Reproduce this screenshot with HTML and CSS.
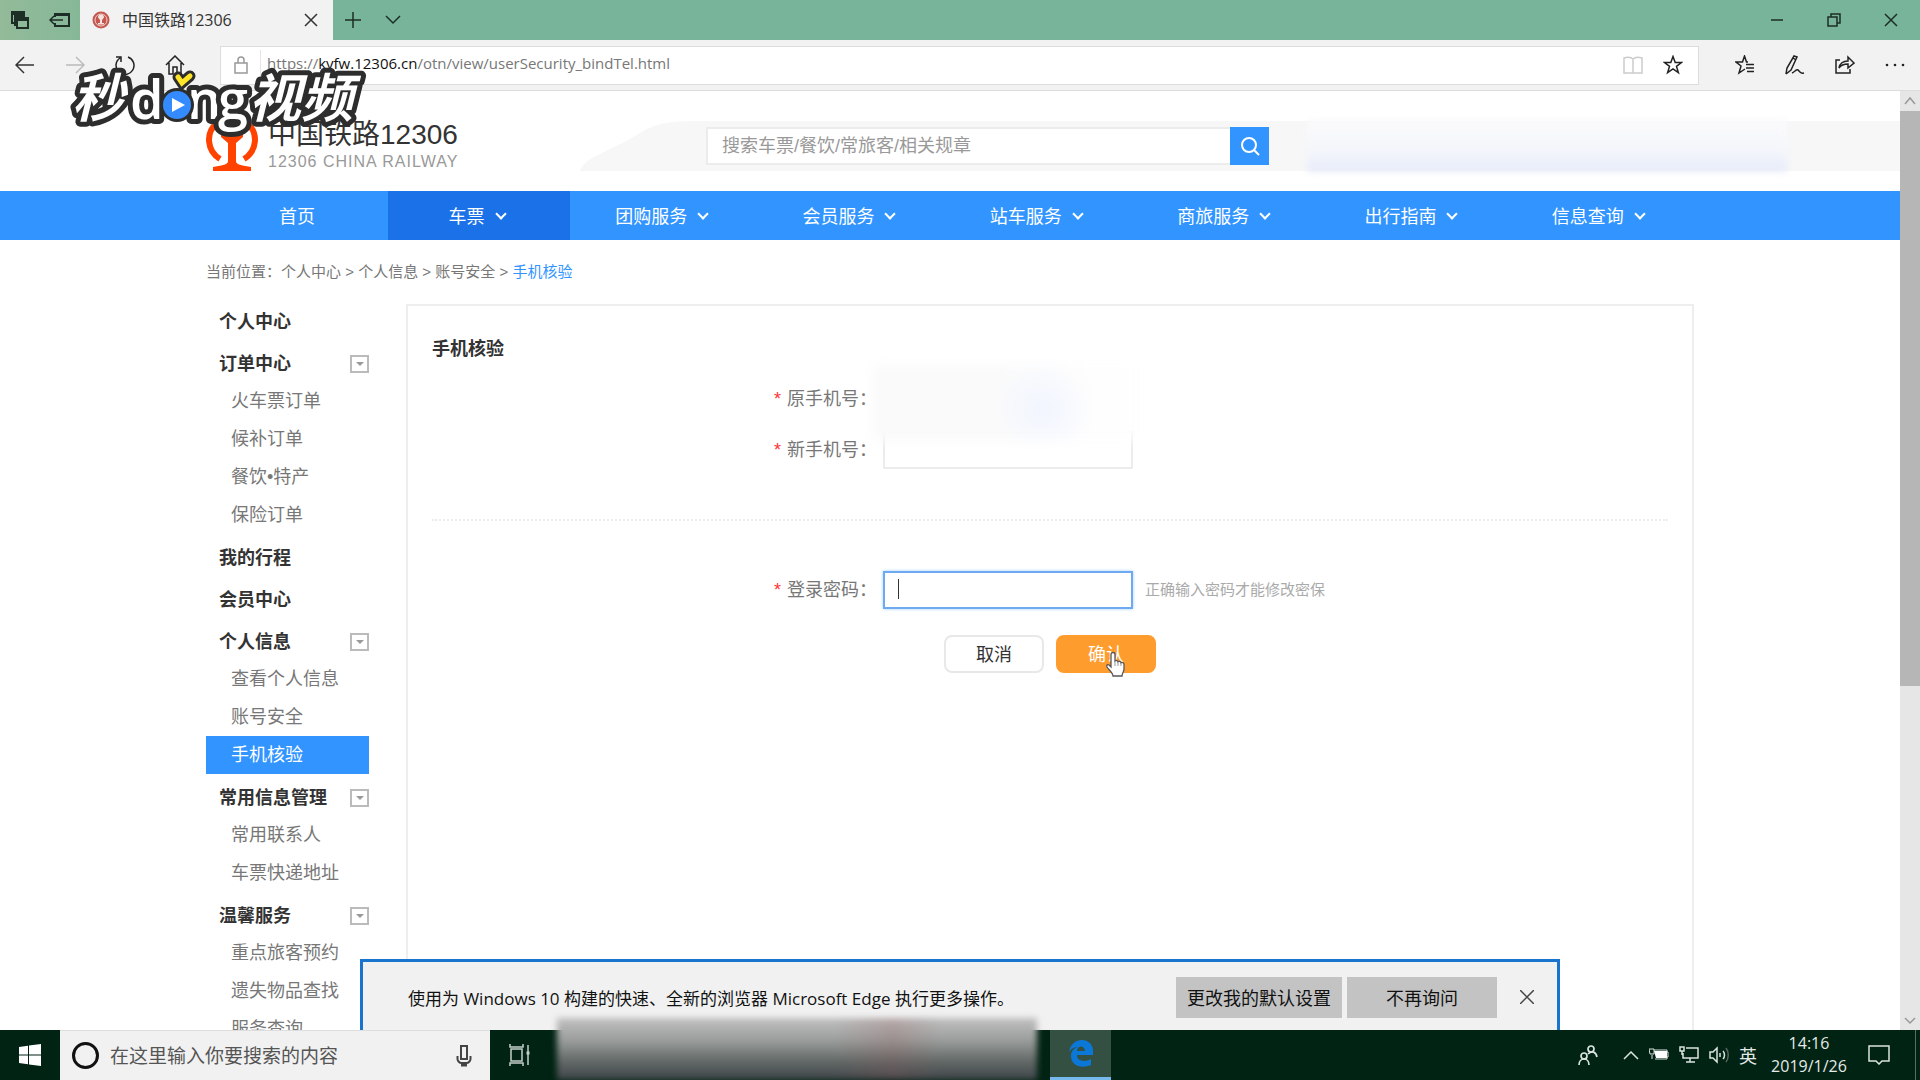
FILE: index.html
```html
<!DOCTYPE html>
<html lang="zh-CN">
<head>
  <meta charset="UTF-8" />
  <meta name="viewport" content="width=device-width, initial-scale=1.0" />
  <title>中国铁路12306</title>
  <link rel="stylesheet" href="styles.css">
</head>
<body>

  <!-- 标签栏 -->
  <div class="tabbar">
    <div class="tab-tools">
      <button class="icon-btn" aria-label="已保存的标签页">
        <svg width="20" height="20" viewBox="0 0 20 20" fill="none" stroke="#1c2e25" stroke-width="2"><path d="M4 13H2V2h12v3M2 4h12"/><path d="M5 16V6h10"/><rect x="7" y="8" width="11" height="10"/><path d="M7 10h11"/></svg>
      </button>
      <button class="icon-btn" aria-label="保存标签页">
        <svg width="22" height="20" viewBox="0 0 22 20" fill="none" stroke="#1c2e25" stroke-width="2"><path d="M6 7V4h14v12H6v-3M6 5h14"/><path d="M14 10H2M5 6l-4 4 4 4" stroke-width="1.5"/></svg>
      </button>
    </div>
    <div class="tab">
      <svg width="18" height="18" viewBox="0 0 18 18"><circle cx="9" cy="9" r="8.500" fill="#c4574f"/><circle cx="9" cy="9" r="6" fill="none" stroke="#f0d0cc"/><path d="M6 6.500a3 3 0 0 1 6 0L10 9v3h2v1.500H6V12h2V9z" fill="#f6e3e0"/></svg>
      <span class="tab-title">中国铁路12306</span>
      <button class="icon-btn" aria-label="关闭标签页">
        <svg width="14" height="14" viewBox="0 0 14 14" stroke="#333" stroke-width="1.500"><path d="M1 1l12 12M13 1L1 13"/></svg>
      </button>
    </div>
    <div class="tab-actions">
      <button class="icon-btn" aria-label="新建标签页">
        <svg width="16" height="16" viewBox="0 0 16 16" stroke="#1c2e25" stroke-width="1.500"><path d="M8 0v16M0 8h16"/></svg>
      </button>
      <button class="icon-btn" aria-label="标签页预览">
        <svg width="16" height="10" viewBox="0 0 16 10" fill="none" stroke="#1c2e25" stroke-width="1.500"><path d="M1 1l7 7 7-7"/></svg>
      </button>
    </div>
    <div class="window-actions">
      <button class="icon-btn" aria-label="最小化">
        <svg width="14" height="14" viewBox="0 0 14 14" stroke="#1c2e25" stroke-width="1.500"><path d="M1 7h12"/></svg>
      </button>
      <button class="icon-btn" aria-label="还原">
        <svg width="14" height="14" viewBox="0 0 14 14" fill="none" stroke="#1c2e25" stroke-width="1.500"><rect x="1" y="4" width="9" height="9"/><path d="M4 4V1h9v9h-3"/></svg>
      </button>
      <button class="icon-btn" aria-label="关闭">
        <svg width="14" height="14" viewBox="0 0 14 14" stroke="#1c2e25" stroke-width="1.500"><path d="M1 1l12 12M13 1L1 13"/></svg>
      </button>
    </div>
  </div>

  <!-- 地址栏 -->
  <div class="toolbar">
    <div class="nav-buttons">
      <button class="icon-btn" aria-label="后退">
        <svg width="20" height="18" viewBox="0 0 20 18" fill="none" stroke="#333" stroke-width="1.500"><path d="M19 9H1M9 1L1 9l8 8"/></svg>
      </button>
      <button class="icon-btn" aria-label="前进">
        <svg width="20" height="18" viewBox="0 0 20 18" fill="none" stroke="#bbb" stroke-width="1.500"><path d="M1 9h18M11 1l8 8-8 8"/></svg>
      </button>
      <button class="icon-btn" aria-label="刷新">
        <svg width="20" height="20" viewBox="0 0 20 20" fill="none" stroke="#222" stroke-width="1.500"><path d="M13 2a9 9 0 1 1-8 1M1 2h5v5"/></svg>
      </button>
      <button class="icon-btn" aria-label="主页">
        <svg width="20" height="20" viewBox="0 0 20 20" fill="none" stroke="#222" stroke-width="1.500"><path d="M1 10l9-9 9 9M4 8v11h4v-7h4v7h4V8"/></svg>
      </button>
    </div>
    <div class="address">
      <svg class="lock" width="14" height="18" viewBox="0 0 14 18" fill="none" stroke="#999" stroke-width="1.500"><rect x="1" y="7" width="12" height="10"/><path d="M4 7V4a3 3 0 0 1 6 0v3"/></svg>
      <div class="url">https://<b>kyfw.12306.cn</b>/otn/view/userSecurity_bindTel.html</div>
      <button class="icon-btn" aria-label="阅读视图">
        <svg width="20" height="18" viewBox="0 0 20 18" fill="none" stroke="#ccc" stroke-width="1.500"><path d="M10 3v14M1 17V2c3-1 7-1 9 1 2-2 6-2 9-1v15z"/></svg>
      </button>
      <button class="icon-btn" aria-label="收藏">
        <svg width="20" height="20" viewBox="0 0 20 20" fill="none" stroke="#222" stroke-width="1.500"><path d="M10 1.500l2.200 6h6.300l-5 3.900 1.900 6.300-5.400-3.800-5.400 3.800 1.900-6.300-5-3.900h6.300z"/></svg>
      </button>
    </div>
    <div class="browser-actions">
      <button class="icon-btn" aria-label="收藏夹">
        <svg width="20" height="20" viewBox="0 0 20 20" fill="none" stroke="#222" stroke-width="1.500"><path d="M13 7h-1.500l-2-6-2 6H1l5 4-2 7 6-4M11 9.500h8M11 13h8M12 16.500h7"/></svg>
      </button>
      <button class="icon-btn" aria-label="添加备注">
        <svg width="20" height="20" viewBox="0 0 20 20" fill="none" stroke="#222" stroke-width="1.500"><path d="M1 19l1-6L9 1l3 1-6 13-5 4M8 3l3 2"/><path d="M7 18c3-1 4-4 6-3s1 4 6 3"/></svg>
      </button>
      <button class="icon-btn" aria-label="共享">
        <svg width="20" height="20" viewBox="0 0 20 20" fill="none" stroke="#222" stroke-width="1.500"><path d="M5 5H1v13h14v-4"/><path d="M4 13c1-5 4-7 9-7V2l6 6-6 5V9c-4 0-7 1-9 4z"/></svg>
      </button>
      <button class="icon-btn" aria-label="更多">
        <svg width="20" height="4" viewBox="0 0 20 4" fill="#222"><circle cx="2" cy="2" r="1.300"/><circle cx="10" cy="2" r="1.300"/><circle cx="18" cy="2" r="1.300"/></svg>
      </button>
    </div>
  </div>

  <div class="viewport">
    <main class="page">
      <header class="header">
        <div class="header-band">
          <svg width="120" height="50" viewBox="0 0 120 50"><path d="M0 50C4 36 28 32 60 12 76 2 90 0 120 0v50z" fill="#f7f7f7"/></svg>
          <div class="band-fill"></div>
        </div>
        <div class="user-haze"></div>
        <div class="container header-inner">
          <a class="logo" href="#">
            <svg width="52" height="60" viewBox="0 0 52 60" fill="none">
              <path d="M14 48C1 40-1 22 11 12a22 22 0 0 1 30 0c12 10 10 28-3 36" stroke="#ff4200" stroke-width="6"/>
              <path d="M15 18h22v8l-7 6v18c0 3 3 4 15 6v4H7v-4c12-2 15-3 15-6V32l-7-6z" fill="#ff4200"/>
            </svg>
            <span class="logo-text">
              <span class="logo-name">中国铁路12306</span>
              <span class="logo-sub">12306 CHINA RAILWAY</span>
            </span>
          </a>
          <form class="search">
            <input type="text" aria-label="搜索" placeholder="搜索车票/餐饮/常旅客/相关规章">
            <button type="button" aria-label="搜索">
              <svg width="20" height="20" viewBox="0 0 20 20" fill="none" stroke="#fff" stroke-width="2"><circle cx="9" cy="9" r="7"/><path d="M14 14l5 5"/></svg>
            </button>
          </form>
        </div>
      </header>

      <nav class="mainnav">
        <ul class="container">
          <li class="narrow"><a href="#">首页</a></li>
          <li class="narrow active"><a href="#">车票<i></i></a></li>
          <li><a href="#">团购服务<i></i></a></li>
          <li><a href="#">会员服务<i></i></a></li>
          <li><a href="#">站车服务<i></i></a></li>
          <li><a href="#">商旅服务<i></i></a></li>
          <li><a href="#">出行指南<i></i></a></li>
          <li><a href="#">信息查询<i></i></a></li>
        </ul>
      </nav>

      <div class="container">
        <div class="crumbs">当前位置：<a href="#">个人中心</a> &gt; <a href="#">个人信息</a> &gt; <a href="#">账号安全</a> &gt; <a class="current" href="#">手机核验</a></div>

        <div class="layout">
          <aside class="sidebar">
            <h3><a href="#">个人中心</a></h3>
            <h3><a href="#">订单中心</a><button aria-label="展开"></button></h3>
            <ul>
              <li><a href="#">火车票订单</a></li>
              <li><a href="#">候补订单</a></li>
              <li><a href="#">餐饮•特产</a></li>
              <li><a href="#">保险订单</a></li>
            </ul>
            <h3><a href="#">我的行程</a></h3>
            <h3><a href="#">会员中心</a></h3>
            <h3><a href="#">个人信息</a><button aria-label="展开"></button></h3>
            <ul>
              <li><a href="#">查看个人信息</a></li>
              <li><a href="#">账号安全</a></li>
              <li class="active"><a href="#">手机核验</a></li>
            </ul>
            <h3><a href="#">常用信息管理</a><button aria-label="展开"></button></h3>
            <ul>
              <li><a href="#">常用联系人</a></li>
              <li><a href="#">车票快递地址</a></li>
            </ul>
            <h3><a href="#">温馨服务</a><button aria-label="展开"></button></h3>
            <ul>
              <li><a href="#">重点旅客预约</a></li>
              <li><a href="#">遗失物品查找</a></li>
              <li><a href="#">服务查询</a></li>
            </ul>
          </aside>

          <section class="panel">
            <h2>手机核验</h2>
            <form class="bind-form">
              <div class="row">
                <span class="label"><em>*</em>原手机号：</span>
                <div class="field"></div>
              </div>
              <div class="row">
                <label class="label" for="newTel"><em>*</em>新手机号：</label>
                <div class="field">
                  <input type="text" id="newTel">
                  <div class="tel-haze"></div>
                </div>
              </div>
              <hr>
              <div class="row">
                <label class="label" for="password"><em>*</em>登录密码：</label>
                <div class="field">
                  <input class="focused" type="password" id="password">
                  <span class="caret"></span>
                  <span class="hint">正确输入密码才能修改密保</span>
                </div>
              </div>
              <div class="buttons">
                <button type="button" class="btn">取消</button>
                <button type="button" class="btn btn-primary">确认
                  <svg class="pointer" width="20" height="26" viewBox="0 0 20 26"><path d="M6 16V3.500a2 2 0 0 1 4 0V10c1-1 3-.5 3 .8 1-1 3-.3 3 1 1-.8 3-.2 3 1.700V18c0 3-2 4-2 7H8c0-3-4-6-6-9-1-2 1-3 2-2z" fill="#fff" stroke="#555" stroke-width="1.300"/><path d="M10 10v5M13 11v4M16 12v3" stroke="#999"/></svg>
                </button>
              </div>
            </form>
          </section>
        </div>
      </div>
    </main>

    <div class="scrollbar">
      <svg width="20" height="20" viewBox="0 0 20 20" fill="none" stroke="#999" stroke-width="1.500"><path d="M5 13l5-6 5 6"/></svg>
      <div class="track"><div class="thumb"></div></div>
      <svg width="20" height="20" viewBox="0 0 20 20" fill="none" stroke="#999" stroke-width="1.500"><path d="M5 8l5 5 5-5"/></svg>
    </div>

    <!-- Edge 默认浏览器提示 -->
    <div class="notice">
      <p>使用为 Windows 10 构建的快速、全新的浏览器 Microsoft Edge 执行更多操作。</p>
      <button class="notice-btn wide">更改我的默认设置</button>
      <button class="notice-btn">不再询问</button>
      <button class="icon-btn" aria-label="关闭提示">
        <svg width="14" height="14" viewBox="0 0 14 14" stroke="#444" stroke-width="1.500"><path d="M0 0l14 14M14 0L0 14"/></svg>
      </button>
    </div>
  </div>

  <!-- 任务栏 -->
  <div class="taskbar">
    <button class="start" aria-label="开始">
      <svg width="22" height="22" viewBox="0 0 22 22" fill="#fff"><path d="M0 3l9-1.300V10.500H0zM10 1.500L22 0v10.500H10zM0 11.500h9v8.800L0 19zM10 11.500h12V22l-12-1.500z"/></svg>
    </button>
    <label class="taskbar-search">
      <span class="cortana"></span>
      <input type="text" aria-label="搜索" placeholder="在这里输入你要搜索的内容">
      <svg width="16" height="22" viewBox="0 0 16 22" fill="none" stroke="#444" stroke-width="2"><rect x="5" y="1" width="6" height="13"/><path d="M1.500 11v3c0 2 2 4 4 4h5c2 0 4-2 4-4v-3"/><path d="M5 20h6" stroke-width="3"/></svg>
    </label>
    <button class="task-view" aria-label="任务视图">
      <svg width="22" height="22" viewBox="0 0 22 22" fill="none" stroke="#c5d0ca" stroke-width="1.500"><rect x="2" y="5" width="11" height="12"/><path d="M1 0v3h13V0M1 22v-3h13v3M19 1v20"/><path d="M17.500 9h3" stroke-width="3"/></svg>
    </button>
    <div class="task-haze"></div>
    <button class="task-edge" aria-label="Microsoft Edge">
      <svg width="24" height="27" viewBox="0 0 24 27" fill="#0b78d8"><path d="M0 12C1 5 6 0 13 0c7 0 11 5 11 11v4H8c0 7 9 7 14 4v6c-9 4-20 1-20-9 0-5 3-8 7-9-5 0-8 3-9 5zM8 11h8c0-6-8-6-8 0z"/></svg>
    </button>
    <div class="tray">
      <svg class="people" width="20" height="20" viewBox="0 0 20 20" fill="none" stroke="#dbe3df" stroke-width="1.700"><circle cx="13" cy="4" r="3"/><circle cx="6" cy="11" r="3"/><path d="M1 20c0-8 10-8 10 0M10 9c4-4 8-2 9 3"/></svg>
      <svg width="16" height="9" viewBox="0 0 16 9" fill="none" stroke="#dbe3df" stroke-width="1.500"><path d="M1 8l7-7 7 7"/></svg>
      <svg width="20" height="14" viewBox="0 0 20 14" fill="#fff"><path d="M5 3h13v7H7z"/><path d="M5 2h13v2h1v5h-1v2H6M3 7v4M0 1h5v5H1z" fill="none" stroke="#dbe3df"/></svg>
      <svg width="20" height="18" viewBox="0 0 20 18" fill="none" stroke="#dbe3df" stroke-width="1.500"><path d="M7 2h12v10H4V7M11 12v4M7 16h9M1 1h4v4H1zM3 5v4"/></svg>
      <svg width="20" height="18" viewBox="0 0 20 18" fill="none" stroke="#dbe3df" stroke-width="1.500"><path d="M1 6h3l4-4v14l-4-4H1zM11 7v4M14 5c2 2 2 6 0 8"/><path d="M17 2c3 4 3 10 0 14" stroke="#52665b"/></svg>
      <span class="ime">英</span>
      <div class="clock"><span>14:16</span><span>2019/1/26</span></div>
      <svg width="22" height="20" viewBox="0 0 22 20" fill="none" stroke="#dbe3df" stroke-width="1.500"><path d="M1 1h20v15h-7l-3 3-3-3H1z"/></svg>
      <span class="show-desktop"></span>
    </div>
  </div>

  <!-- 视频水印 -->
  <svg class="watermark" width="310" height="84" viewBox="0 0 310 84" aria-label="秒懂视频">
    <g class="wm-text">
      <text class="wm-cjk" x="9" y="57">秒</text>
      <text class="wm-latin" x="67" y="59">d</text>
      <text class="wm-latin" x="124" y="59">n</text>
      <text class="wm-latin" x="155" y="59">g</text>
      <text class="wm-cjk" x="186" y="57">视频</text>
    </g>
    <circle cx="114" cy="45" r="17" fill="#2d2d2d"/>
    <circle cx="114" cy="45" r="14" fill="#338bff"/>
    <path d="M109 38v14l13-7z" fill="#fff"/>
    <path d="M115 17l4 6 8-7" fill="none" stroke="#2d2d2d" stroke-width="11" stroke-linecap="round"/>
    <path d="M115 17l4 6 8-7" fill="none" stroke="#ffe428" stroke-width="5" stroke-linecap="round"/>
  </svg>

</body>
</html>
```

FILE: styles.css
```css
* {
  box-sizing: border-box;
}

body {
  margin: 0;
  height: 100vh;
  display: flex;
  flex-direction: column;
  overflow: hidden;
  position: relative;
  font-family: "Open Sans", "Noto Sans CJK SC", sans-serif;
  font-size: 18px;
  color: #333;
  background: #fff;
}

a {
  color: inherit;
  text-decoration: none;
}

ul {
  list-style: none;
  margin: 0;
  padding: 0;
}

button,
input {
  font: inherit;
  color: inherit;
}

button {
  border: 0;
  padding: 0;
  background: none;
}

svg {
  display: block;
  flex: none;
}

.icon-btn {
  display: flex;
  align-items: center;
  justify-content: center;
}

/* 标签栏 */
.tabbar {
  flex: none;
  height: 40px;
  display: flex;
  background: #78b49a;
}

.tab-tools {
  width: 80px;
  display: flex;
  align-items: center;
  justify-content: space-between;
  padding: 0 9px 0 10px;
  background: linear-gradient(90deg, #93ba99, #86b898);
}

.tab {
  width: 253px;
  display: flex;
  align-items: center;
  padding: 0 15px 0 12px;
  background: #f2f2f2;
}

.tab-title {
  flex: 1;
  margin-left: 12px;
  font-size: 16px;
  line-height: 40px;
}

.tab-actions {
  display: flex;
  gap: 24px;
  padding-left: 12px;
}

.window-actions {
  display: flex;
  gap: 43px;
  margin-left: auto;
  padding-right: 22px;
}

/* 地址栏 */
.toolbar {
  flex: none;
  height: 51px;
  display: flex;
  align-items: center;
  padding: 0 15px;
  background: #f2f2f2;
  border-bottom: 1px solid #dcdcdc;
}

.nav-buttons {
  width: 205px;
  display: flex;
  gap: 30px;
}

.address {
  flex: 1;
  height: 39px;
  display: flex;
  align-items: center;
  margin-right: 36px;
  padding: 0 15px 0 13px;
  background: #fff;
  border: 1px solid #ddd;
}

.lock {
  margin-right: 12px;
}

.url {
  flex: 1;
  padding: 0 0 4px 6px;
  border-left: 1px solid #e5e5e5;
  font-size: 15px;
  line-height: 26px;
  color: #777;
}

.url b {
  font-weight: normal;
  color: #111;
}

.address .icon-btn + .icon-btn {
  margin-left: 20px;
}

.browser-actions {
  display: flex;
  gap: 30px;
}

/* 页面 */
.viewport {
  flex: 1;
  min-height: 0;
  display: flex;
  position: relative;
  overflow: hidden;
}

.page {
  flex: 1;
  min-width: 0;
  font-family: "Liberation Sans", "Noto Sans CJK SC", sans-serif;
}

.container {
  max-width: 1488px;
  margin: 0 auto;
}

.header {
  position: relative;
  height: 100px;
}

.header-band {
  position: absolute;
  top: 30px;
  left: 580px;
  right: 0;
  display: flex;
}

.band-fill {
  flex: 1;
  background: #f7f7f7;
}

.user-haze {
  position: absolute;
  top: 28px;
  right: 113px;
  width: 480px;
  height: 53px;
  background: linear-gradient(#fbfbfc, #f4f6fb 60%, #e6ebfa);
  filter: blur(3px);
}

.header-inner {
  position: relative;
  display: flex;
  align-items: flex-start;
}

.logo {
  display: flex;
  width: 500px;
  padding-top: 20px;
}

.logo-text {
  display: flex;
  flex-direction: column;
  margin-left: 10px;
  padding-top: 6px;
}

.logo-name {
  font-size: 28px;
  line-height: 36px;
}

.logo-sub {
  font-size: 16px;
  line-height: 18px;
  letter-spacing: 1px;
  color: #999;
}

.search {
  display: flex;
  width: 563px;
  height: 38px;
  margin-top: 36px;
}

.search input {
  flex: 1;
  padding: 0 14px;
  border: 2px solid #ececec;
  border-right: 0;
  outline: 0;
  background: #fff;
}

.search input::placeholder {
  color: #999;
}

.search button {
  width: 39px;
  display: flex;
  align-items: center;
  justify-content: center;
  background: #3295ff;
}

.mainnav {
  background: #3295ff;
  color: #fff;
}

.mainnav ul {
  display: flex;
}

.mainnav li {
  flex: 1;
}

.mainnav .narrow {
  flex: none;
  width: 182px;
}

.mainnav a {
  display: flex;
  align-items: center;
  justify-content: center;
  height: 49px;
  padding-bottom: 2px;
}

.mainnav i {
  width: 8px;
  height: 8px;
  margin: 0 5px 2px 12px;
  border: solid #fff;
  border-width: 0 2px 2px 0;
  transform: rotate(45deg);
}

.mainnav .active {
  background: #1b72e8;
}

.crumbs {
  font-size: 15px;
  line-height: 64px;
  color: #777;
}

.crumbs .current {
  color: #3295ff;
}

.layout {
  display: flex;
  gap: 37px;
}

/* 左侧菜单 */
.sidebar {
  flex: none;
  width: 163px;
}

.sidebar h3 {
  display: flex;
  align-items: center;
  justify-content: space-between;
  margin: 6px 0 0;
  padding-left: 13px;
  font-size: 18px;
  line-height: 36px;
}

.sidebar h3:first-child {
  margin-top: 0;
}

.sidebar h3 button {
  width: 19px;
  height: 18px;
  display: flex;
  align-items: center;
  justify-content: center;
  border: 2px solid #bbb;
}

.sidebar h3 button::after {
  content: "";
  border: 4px solid transparent;
  border-top-color: #999;
  border-bottom: 0;
}

.sidebar li {
  padding-left: 25px;
  line-height: 38px;
  color: #777;
}

.sidebar li.active {
  background: #3295ff;
  color: #fff;
}

/* 右侧表单 */
.panel {
  flex: 1;
  padding: 24px;
  border: 2px solid #eee;
  height: 900px;
}

.panel h2 {
  margin: 0 0 12px;
  font-size: 18px;
  line-height: 38px;
}

.row {
  display: grid;
  grid-template-columns: 36% 1fr;
  gap: 6px;
  height: 38px;
  margin-bottom: 13px;
  line-height: 38px;
}

.label {
  text-align: right;
  color: #777;
}

.label em {
  margin-right: 6px;
  font-style: normal;
  color: #f33;
}

.field {
  position: relative;
  display: flex;
  height: 38px;
}

.field input {
  width: 250px;
  height: 38px;
  padding: 0 14px;
  border: 2px solid #ececec;
  outline: 0;
}

.field .focused {
  border: 2px solid #6faaf0;
  box-shadow: 0 0 3px #9cd0ff;
}

.caret {
  position: absolute;
  top: 8px;
  left: 15px;
  width: 1px;
  height: 20px;
  background: #333;
}

.hint {
  margin-left: 12px;
  font-size: 15px;
  color: #aaa;
}

/* 号码遮挡 */
.tel-haze {
  position: absolute;
  left: -10px;
  bottom: 28px;
  width: 264px;
  height: 76px;
  background: radial-gradient(circle at 170px 44px, #f1f5ff, transparent 50px), linear-gradient(90deg, #fafafa 45%, #fefefe 85%);
  filter: blur(6px);
}

.bind-form hr {
  margin: 50px 0;
  border: 0;
  border-top: 2px dotted #ececec;
}

.buttons {
  display: flex;
  justify-content: center;
  gap: 12px;
  margin-top: 26px;
}

.btn {
  position: relative;
  width: 100px;
  height: 38px;
  padding-bottom: 2px;
  border: 2px solid #e8e8e8;
  border-radius: 8px;
  background: #fff;
}

.btn-primary {
  border-color: #ff9c2e;
  background: #ff9c2e;
  color: #fff;
}

.pointer {
  position: absolute;
  top: 14px;
  left: 47px;
}

.scrollbar {
  flex: none;
  width: 20px;
  display: flex;
  flex-direction: column;
  background: #e6e6e6;
}

.track {
  flex: 1;
}

.thumb {
  height: 64%;
  background: #b6b6b6;
}

/* 底部提示条 */
.notice {
  position: absolute;
  left: 0;
  right: 0;
  bottom: 0;
  width: 1200px;
  height: 71px;
  margin: 0 auto;
  display: flex;
  align-items: center;
  padding: 2px 23px 0 45px;
  background: #f1f1f1;
  border: 3px solid #1874cd;
  border-bottom: 0;
  color: #111;
}

.notice p {
  flex: 1;
  margin: 0;
  font-size: 17px;
}

.notice-btn {
  width: 150px;
  height: 41px;
  background: #c3c3c3;
}

.notice-btn.wide {
  width: 166px;
  margin-right: 5px;
}

.notice .icon-btn {
  margin-left: 23px;
}

/* 任务栏 */
.taskbar {
  flex: none;
  height: 50px;
  display: flex;
  position: relative;
  background: #002313;
  color: #e4eae7;
}

.start {
  width: 60px;
  display: flex;
  align-items: center;
  justify-content: center;
}

.taskbar-search {
  width: 430px;
  display: flex;
  align-items: center;
  padding: 0 18px 0 12px;
  background: #f1f1f1;
  border-top: 1px solid #ddd;
}

.cortana {
  width: 27px;
  height: 27px;
  border: 3px solid #111;
  border-radius: 50%;
}

.taskbar-search input {
  flex: 1;
  padding: 0 0 0 11px;
  border: 0;
  outline: 0;
  background: none;
  font-size: 19px;
}

.taskbar-search input::placeholder {
  color: #555;
}

.task-view {
  width: 60px;
  display: flex;
  align-items: center;
  justify-content: center;
}

.task-haze {
  position: absolute;
  left: 557px;
  bottom: 0;
  width: 480px;
  height: 62px;
  background: linear-gradient(90deg, transparent 58%, rgba(150, 80, 85, 0.2) 70%, transparent 80%), linear-gradient(#c0c0c0, #9c9f9d 35%, #626967 70%, #3f4549);
  filter: blur(3px);
}

.task-edge {
  width: 61px;
  display: flex;
  align-items: center;
  justify-content: center;
  margin-left: 500px;
  background: #345042;
  border-bottom: 3px solid #76b9ed;
}

.tray {
  flex: 1;
  display: flex;
  align-items: center;
  justify-content: flex-end;
  gap: 10px;
}

.people {
  margin-right: 15px;
}

.clock {
  display: flex;
  flex-direction: column;
  width: 84px;
  margin-right: 7px;
  text-align: center;
  font-size: 16px;
  line-height: 23px;
}

.tray .show-desktop {
  width: 5px;
  height: 50px;
  margin-left: 15px;
  border-left: 1px solid #5a6e63;
}

/* 水印 */
.watermark {
  position: absolute;
  top: 60px;
  left: 63px;
}

.wm-text {
  fill: #fff;
  stroke: #2d2d2d;
  stroke-width: 10px;
  stroke-linejoin: round;
  paint-order: stroke;
}

.wm-cjk {
  font: italic bold 52px "Noto Sans CJK SC", sans-serif;
}

.wm-latin {
  font: 600 54px "Open Sans", sans-serif;
}
```
